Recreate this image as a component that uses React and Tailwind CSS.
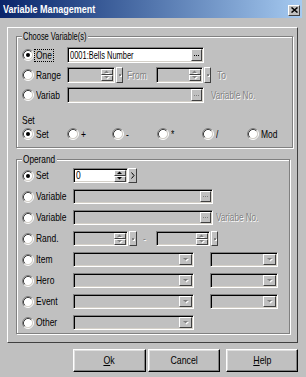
import React from "react";

// Win2000 look: raised / sunken / etched edges
const raised =
  "bg-[#c0c0c0] border border-white border-r-[#404040] border-b-[#404040]";
const sunken =
  "border border-[#808080] border-r-white border-b-white shadow-[inset_1px_1px_0_#000,inset_-1px_-1px_0_#d4d0c8] p-[1px] flex items-stretch";
const etched =
  "border border-[#808080] shadow-[inset_1px_1px_0_#fff,1px_1px_0_#fff]";
const dim = "text-[#808080] [text-shadow:1px_1px_0_#fff]";

// the old dialog font is much narrower than Arial, squeeze it
function Txt({ children, s = "scale-x-[0.77]", o = "origin-left" }) {
  return <span className={`inline-block whitespace-nowrap ${o} ${s}`}>{children}</span>;
}

function Radio({ checked }) {
  return (
    <svg width="12" height="12" viewBox="0 0 12 12" className="shrink-0">
      <circle cx="6" cy="6" r="4.5" fill="#fff" />
      <path d="M2.11 9.89A5.5 5.5 0 0 1 9.89 2.11" stroke="#808080" fill="none" />
      <path d="M9.89 2.11A5.5 5.5 0 0 1 2.11 9.89" stroke="#fff" fill="none" />
      <path d="M2.82 9.18A4.5 4.5 0 0 1 9.18 2.82" stroke="#404040" fill="none" />
      <path d="M9.18 2.82A4.5 4.5 0 0 1 2.82 9.18" stroke="#d4d0c8" fill="none" />
      {checked && <circle cx="6" cy="6" r="2" fill="#000" />}
    </svg>
  );
}

function RadioLabel({ children, checked, focused }) {
  return (
    <div className="flex items-center">
      <Radio checked={checked} />
      <span
        className={`px-[1px] leading-[11px] border border-dotted ${
          focused ? "border-black w-[20px]" : "border-transparent"
        }`}
      >
        <Txt>{children}</Txt>
      </span>
    </div>
  );
}

function Tri({ dir = "down", off }) {
  const d =
    dir === "up" ? "M0 3L2.5 0.5L5 3Z" : dir === "down" ? "M0 0L5 0L2.5 2.5Z" : "M0 0L2.5 2.5L0 5Z";
  const w = dir === "right" ? 3 : 5;
  const h = dir === "right" ? 5 : 3;
  return (
    <svg width={w + 1} height={h + 1} viewBox={`0 0 ${w + 1} ${h + 1}`}>
      {off && <path d={d} fill="#fff" transform="translate(1 1)" />}
      <path d={d} fill={off ? "#808080" : "#000"} />
    </svg>
  );
}

function Spin({ off }) {
  return (
    <div className="flex flex-col w-[12px] shrink-0">
      <div className={`${raised} flex-1 flex items-center justify-center`}>
        <Tri dir="up" off={off} />
      </div>
      <div className={`${raised} flex-1 flex items-center justify-center`}>
        <Tri dir="down" off={off} />
      </div>
    </div>
  );
}

function Tiny({ className, off }) {
  return (
    <div className={`${raised} flex items-center justify-center shrink-0 ${className}`}>
      {off ? (
        <span className="w-[2px] h-[2px] bg-[#808080] shadow-[1px_1px_0_#fff]" />
      ) : (
        <svg width="4" height="7" viewBox="0 0 4 7">
          <path d="M0.5 0.5L3 3.5L0.5 6.5" stroke="#000" fill="none" />
        </svg>
      )}
    </div>
  );
}

function Dots({ off }) {
  const c = off ? "bg-[#808080]" : "bg-black";
  return (
    <div className={`${raised} w-[11px] shrink-0 flex items-center justify-center gap-[1px]`}>
      <span className={`w-[1px] h-[1px] ${c}`} />
      <span className={`w-[1px] h-[1px] ${c}`} />
      <span className={`w-[1px] h-[1px] ${c}`} />
    </div>
  );
}

function Combo({ className }) {
  return (
    <div className={`${sunken} ${className}`}>
      <div className="flex-1" />
      <div className={`${raised} w-[13px] flex items-center justify-center`}>
        <Tri dir="down" off />
      </div>
    </div>
  );
}

function Btn({ children, className }) {
  return (
    <div
      className={`h-[23px] flex items-center justify-center border border-white border-r-black border-b-black shadow-[inset_-1px_-1px_0_#808080,inset_1px_1px_0_#dfdfdf] ${className}`}
    >
      <Txt s="scale-x-[0.8]" o="origin-center">
        {children}
      </Txt>
    </div>
  );
}

function CloseBtn() {
  return (
    <div className={`${raised} w-[12px] h-[11px] flex items-center justify-center mt-[2px]`}>
      <svg width="7" height="6" viewBox="0 0 7 6">
        <path d="M0.5 0.5L6.5 5.5M6.5 0.5L0.5 5.5" stroke="#000" strokeWidth="1.5" />
      </svg>
    </div>
  );
}

export default function App() {
  return (
    <div className="w-[306px] h-[377px] bg-[#c0c0c0] text-black text-[11px] leading-[13px] font-['Liberation_Sans',Arial,sans-serif] overflow-hidden">
      {/* title bar */}
      <div className="w-[302px] h-[18px] flex items-center justify-between pl-[3px] pr-[2px] bg-linear-to-r from-[#0a246a] to-[#a6caf0]">
        <span className="text-white font-bold">
          <Txt s="scale-x-[0.82]">Variable Management</Txt>
        </span>
        <CloseBtn />
      </div>

      <div className="ml-[7px] mt-[9px] w-[291px] h-[316px] border border-white border-r-[#404040] border-b-[#404040] pl-[8px]">
        {/* choose variable */}
        <fieldset className={`${etched} mt-[2px] w-[274px] h-[118px]`}>
          <legend className="ml-[5px] px-[1px] w-[66px] leading-[13px] bg-[#c0c0c0]">
            <Txt s="scale-x-[0.68]">Choose Variable(s)</Txt>
          </legend>
          <div className="mt-[2px] pl-[5px]">
            <div className="flex items-center h-[20px]">
              <div className="w-[45px]">
                <RadioLabel checked focused>One</RadioLabel>
              </div>
              <div className={`${sunken} w-[137px] h-[16px] bg-white`}>
                <span className="flex-1 pl-[1px] leading-[12px] overflow-hidden">
                  <Txt s="scale-x-[0.68]">0001:Bells Number</Txt>
                </span>
                <Dots />
              </div>
            </div>
            <div className="flex items-center h-[20px]">
              <div className="w-[45px]">
                <RadioLabel>Range</RadioLabel>
              </div>
              <div className={`${sunken} w-[48px] h-[16px]`}>
                <div className="flex-1" />
                <Spin off />
              </div>
              <Tiny off className="ml-[1px] w-[7px] h-[16px]" />
              <span className={`${dim} ml-[4px] w-[29px]`}>
                <Txt>From</Txt>
              </span>
              <div className={`${sunken} w-[47px] h-[16px]`}>
                <div className="flex-1" />
                <Spin off />
              </div>
              <Tiny off className="ml-[1px] w-[7px] h-[16px]" />
              <span className={`${dim} ml-[6px]`}>
                <Txt>To</Txt>
              </span>
            </div>
            <div className="flex items-center h-[20px]">
              <div className="w-[45px]">
                <RadioLabel>Variab</RadioLabel>
              </div>
              <div className={`${sunken} w-[137px] h-[16px]`}>
                <div className="flex-1" />
                <Dots off />
              </div>
              <span className={`${dim} ml-[7px]`}>
                <Txt s="scale-x-[0.74]">Variable No.</Txt>
              </span>
            </div>
            <div className="mt-[9px] leading-[13px]">
              <Txt>Set</Txt>
            </div>
            <div className="flex items-center h-[14px]">
              {["Set", "+", "-", "*", "/", "Mod"].map((t, i) => (
                <div key={t} className="w-[45px]">
                  <RadioLabel checked={i === 0}>{t}</RadioLabel>
                </div>
              ))}
            </div>
          </div>
        </fieldset>

        {/* operand */}
        <fieldset className={`${etched} mt-[5px] w-[274px] h-[181px]`}>
          <legend className="ml-[5px] px-[1px] w-[35px] leading-[13px] bg-[#c0c0c0]">
            <Txt s="scale-x-[0.75]">Operand</Txt>
          </legend>
          <div className="-mt-[1px] pl-[5px]">
            <div className="flex items-center h-[21px]">
              <div className="w-[51px]">
                <RadioLabel checked>Set</RadioLabel>
              </div>
              <div className={`${sunken} w-[55px] h-[15px] bg-white`}>
                <span className="flex-1 pl-[1px] leading-[11px]">
                  <Txt>0</Txt>
                </span>
                <Spin />
              </div>
              <Tiny className="w-[9px] h-[15px]" />
            </div>
            <div className="flex items-center h-[21px]">
              <div className="w-[51px]">
                <RadioLabel>Variable</RadioLabel>
              </div>
              <div className={`${sunken} w-[140px] h-[15px]`}>
                <div className="flex-1" />
                <Dots off />
              </div>
            </div>
            <div className="flex items-center h-[21px]">
              <div className="w-[51px]">
                <RadioLabel>Variable</RadioLabel>
              </div>
              <div className={`${sunken} w-[140px] h-[15px]`}>
                <div className="flex-1" />
                <Dots off />
              </div>
              <span className={`${dim} ml-[3px]`}>
                <Txt s="scale-x-[0.74]">Variabe No.</Txt>
              </span>
            </div>
            <div className="flex items-center h-[21px]">
              <div className="w-[51px]">
                <RadioLabel>Rand.</RadioLabel>
              </div>
              <div className={`${sunken} w-[55px] h-[15px]`}>
                <div className="flex-1" />
                <Spin off />
              </div>
              <Tiny off className="ml-[1px] w-[8px] h-[15px]" />
              <span className={`${dim} ml-[6px] w-[13px]`}>
                <Txt>-</Txt>
              </span>
              <div className={`${sunken} w-[54px] h-[15px]`}>
                <div className="flex-1" />
                <Spin off />
              </div>
              <Tiny off className="ml-[1px] w-[7px] h-[15px]" />
            </div>
            {["Item", "Hero", "Event"].map((t) => (
              <div key={t} className="flex items-center h-[21px]">
                <div className="w-[51px]">
                  <RadioLabel>{t}</RadioLabel>
                </div>
                <Combo className="w-[121px] h-[15px]" />
                <Combo className="ml-[16px] w-[68px] h-[15px]" />
              </div>
            ))}
            <div className="flex items-center h-[21px]">
              <div className="w-[51px]">
                <RadioLabel>Other</RadioLabel>
              </div>
              <Combo className="w-[121px] h-[15px]" />
            </div>
          </div>
        </fieldset>
      </div>

      <div className="mt-[6px] flex pl-[73px]">
        <Btn className="w-[73px]">
          <u>O</u>k
        </Btn>
        <Btn className="ml-[2px] w-[72px]">Cancel</Btn>
        <Btn className="ml-[6px] w-[72px]">
          <u>H</u>elp
        </Btn>
      </div>
    </div>
  );
}
